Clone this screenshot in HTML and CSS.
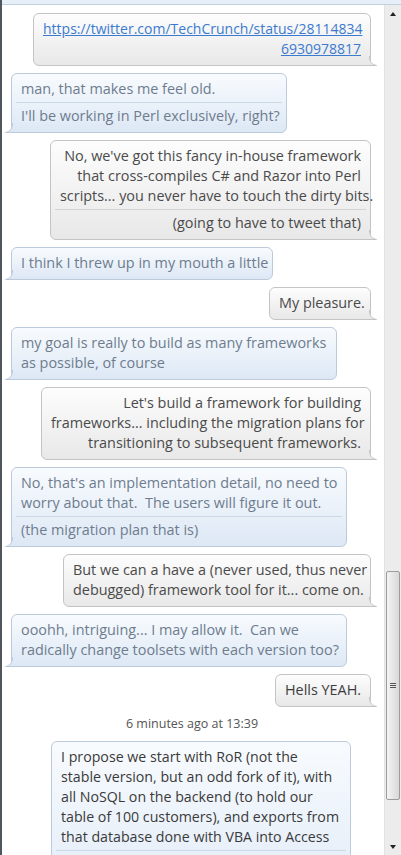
FILE: index.html
```html
<!DOCTYPE html>
<html>
<head>
<meta charset="utf-8">
<link rel="stylesheet" href="styles.css">
</head>
<body>
<div class="window">
  <div class="edge"></div>
  <div class="main">
    <div class="topstrip"></div>
    <div class="pane">
      <div class="chat">
        <div class="bubble sent w338">
          <div class="sect"><a class="link" href="#">https://twitter.com/TechCrunch/status/28114834<br>6930978817</a></div>
          <svg class="tail tail-r" width="8" height="10" viewBox="0 0 8 10"><path class="tf" d="M0 0 L1 0 C1 6 3 8.6 7.5 9.5 L0 9.5 Z"/><path class="ts" d="M0.5 0 C0.5 6 3 8.6 7.5 9.5 L0 9.5"/></svg>
        </div>
        <div class="bubble recv w276">
          <div class="sect">man, that makes me feel old.</div>
          <div class="rule"></div>
          <div class="sect">I'll be working in Perl exclusively, right?</div>
          <svg class="tail tail-l" width="8" height="10" viewBox="0 0 8 10"><path class="tf" d="M8 0 L7 0 C7 6 5 8.6 0.5 9.5 L8 9.5 Z"/><path class="ts" d="M7.5 0 C7.5 6 5 8.6 0.5 9.5 L8 9.5"/></svg>
        </div>
        <div class="bubble sent w321">
          <div class="sect">No, we've got this fancy in-house framework<br>that cross-compiles C# and Razor into Perl<br>scripts... you never have to touch the dirty bits.</div>
          <div class="rule"></div>
          <div class="sect">(going to have to tweet that)</div>
          <svg class="tail tail-r" width="8" height="10" viewBox="0 0 8 10"><path class="tf" d="M0 0 L1 0 C1 6 3 8.6 7.5 9.5 L0 9.5 Z"/><path class="ts" d="M0.5 0 C0.5 6 3 8.6 7.5 9.5 L0 9.5"/></svg>
        </div>
        <div class="bubble recv w262">
          <div class="sect">I think I threw up in my mouth a little</div>
          <svg class="tail tail-l" width="8" height="10" viewBox="0 0 8 10"><path class="tf" d="M8 0 L7 0 C7 6 5 8.6 0.5 9.5 L8 9.5 Z"/><path class="ts" d="M7.5 0 C7.5 6 5 8.6 0.5 9.5 L8 9.5"/></svg>
        </div>
        <div class="bubble sent w102">
          <div class="sect">My pleasure.</div>
          <svg class="tail tail-r" width="8" height="10" viewBox="0 0 8 10"><path class="tf" d="M0 0 L1 0 C1 6 3 8.6 7.5 9.5 L0 9.5 Z"/><path class="ts" d="M0.5 0 C0.5 6 3 8.6 7.5 9.5 L0 9.5"/></svg>
        </div>
        <div class="bubble recv w326">
          <div class="sect">my goal is really to build as many frameworks<br>as possible, of course</div>
          <svg class="tail tail-l" width="8" height="10" viewBox="0 0 8 10"><path class="tf" d="M8 0 L7 0 C7 6 5 8.6 0.5 9.5 L8 9.5 Z"/><path class="ts" d="M7.5 0 C7.5 6 5 8.6 0.5 9.5 L8 9.5"/></svg>
        </div>
        <div class="bubble sent w330">
          <div class="sect">Let's build a framework for building<br>frameworks... including the migration plans for<br>transitioning to subsequent frameworks.</div>
          <svg class="tail tail-r" width="8" height="10" viewBox="0 0 8 10"><path class="tf" d="M0 0 L1 0 C1 6 3 8.6 7.5 9.5 L0 9.5 Z"/><path class="ts" d="M0.5 0 C0.5 6 3 8.6 7.5 9.5 L0 9.5"/></svg>
        </div>
        <div class="bubble recv w336">
          <div class="sect">No, that's an implementation detail, no need to<br>worry about that.&nbsp; The users will figure it out.</div>
          <div class="rule"></div>
          <div class="sect">(the migration plan that is)</div>
          <svg class="tail tail-l" width="8" height="10" viewBox="0 0 8 10"><path class="tf" d="M8 0 L7 0 C7 6 5 8.6 0.5 9.5 L8 9.5 Z"/><path class="ts" d="M7.5 0 C7.5 6 5 8.6 0.5 9.5 L8 9.5"/></svg>
        </div>
        <div class="bubble sent w308">
          <div class="sect">But we can a have a (never used, thus never<br>debugged) framework tool for it... come on.</div>
          <svg class="tail tail-r" width="8" height="10" viewBox="0 0 8 10"><path class="tf" d="M0 0 L1 0 C1 6 3 8.6 7.5 9.5 L0 9.5 Z"/><path class="ts" d="M0.5 0 C0.5 6 3 8.6 7.5 9.5 L0 9.5"/></svg>
        </div>
        <div class="bubble recv w336">
          <div class="sect">ooohh, intriguing... I may allow it.&nbsp; Can we<br>radically change toolsets with each version too?</div>
          <svg class="tail tail-l" width="8" height="10" viewBox="0 0 8 10"><path class="tf" d="M8 0 L7 0 C7 6 5 8.6 0.5 9.5 L8 9.5 Z"/><path class="ts" d="M7.5 0 C7.5 6 5 8.6 0.5 9.5 L8 9.5"/></svg>
        </div>
        <div class="bubble sent w96">
          <div class="sect dark">Hells YEAH.</div>
          <svg class="tail tail-r" width="8" height="10" viewBox="0 0 8 10"><path class="tf" d="M0 0 L1 0 C1 6 3 8.6 7.5 9.5 L0 9.5 Z"/><path class="ts" d="M0.5 0 C0.5 6 3 8.6 7.5 9.5 L0 9.5"/></svg>
        </div>
        <div class="stamp">6 minutes ago at 13:39</div>
        <div class="bubble mine w300">
          <div class="sect">I propose we start with RoR (not the<br>stable version, but an odd fork of it), with<br>all NoSQL on the backend (to hold our<br>table of 100 customers), and exports from<br>that database done with VBA into Access</div>
          <div class="rule"></div>
          <div class="sect">&nbsp;</div>
        </div>
      </div>
      <div class="scrollbar">
        <div class="arrow up"></div>
        <div class="track">
          <div class="thumb"><div class="grip"><span></span><span></span><span></span></div></div>
        </div>
        <div class="arrow down"></div>
      </div>
    </div>
  </div>
</div>
</body>
</html>
```

FILE: styles.css
```css
* { box-sizing: border-box; }
html, body { margin: 0; padding: 0; background: #ffffff; }
body { width: 401px; height: 855px; overflow: hidden; font-family: "Open Sans", "Noto Sans", sans-serif; }

.window { display: flex; width: 401px; height: 855px; overflow: hidden; }
.edge { width: 2px; flex: none; background: #50565e; }
.main { flex: 1; display: flex; flex-direction: column; min-width: 0; }
.topstrip { height: 5px; flex: none; background: #e6eef7; border-bottom: 1px solid #c4d0de; }
.pane { flex: 1; display: flex; min-height: 0; }

.chat { flex: 1; display: flex; flex-direction: column; gap: 7px; padding-top: 8px; overflow: hidden; min-width: 0; }

.bubble { position: relative; flex: none; border: 1px solid #c4c4c4; border-radius: 6px; padding: 5px 9px 6px; font-size: 14.4px; line-height: 20px; white-space: nowrap; }
.sent { align-self: flex-end; margin-right: 13px; text-align: right; color: #4a4a4a; background: linear-gradient(#fdfdfd, #e8e8e8); border-bottom-right-radius: 0; }
.recv { align-self: flex-start; margin-left: 9px; color: #6e7c8e; background: linear-gradient(#f8fbfe, #dde8f5); border-color: #bdcadb; border-bottom-left-radius: 0; }
.mine { align-self: flex-start; margin-left: 49px; color: #3a3a3a; background: linear-gradient(#f8fbfe, #e4edf8); border-color: #bdcadb; font-size: 14.2px; }
.dark { color: #3c3c3c; }

.rule { height: 1px; margin: 3px -5px; background: #d3d3d3; }
.recv .rule, .mine .rule { background: #ccd8e6; }

.link { color: #3b7bcf; text-decoration: underline; font-size: 14px; }

.tail { position: absolute; bottom: -1px; overflow: visible; }
.tail-r { right: -7px; }
.tail-l { left: -7px; }
.tail .ts { fill: none; stroke-width: 1; }
.sent .tf { fill: #e8e8e8; }
.sent .ts { stroke: #c4c4c4; }
.recv .tf { fill: #dde8f5; }
.recv .ts { stroke: #bdcadb; }

.w338 { width: 338px; } .w276 { width: 276px; } .w321 { width: 321px; }
.w262 { width: 262px; } .w102 { width: 102px; } .w326 { width: 326px; }
.w330 { width: 330px; } .w336 { width: 336px; } .w308 { width: 308px; }
.w96 { width: 96px; } .w300 { width: 300px; }

.stamp { flex: none; text-align: center; font-size: 12.5px; line-height: 20px; color: #555; padding-right: 2px; }

.scrollbar { width: 17px; flex: none; display: flex; flex-direction: column; background: #ececec; border-left: 1px solid #e2e2e2; }
.arrow { height: 17px; flex: none; display: flex; align-items: center; justify-content: center; }
.arrow::before { content: ""; width: 0; height: 0; border-left: 3.5px solid transparent; border-right: 3.5px solid transparent; }
.up::before { border-bottom: 4px solid #222; }
.down::before { border-top: 4px solid #222; }
.track { flex: 1; display: flex; flex-direction: column; padding: 549px 1px 0 1px; }
.thumb { height: 229px; border: 1px solid #9c9c9c; border-radius: 2px; background: linear-gradient(to right, #f4f4f4, #e6e6e6 50%, #d8d8d8); display: flex; align-items: center; justify-content: center; }
.grip { display: flex; flex-direction: column; gap: 1px; }
.grip span { display: block; width: 6px; height: 1px; background: #555; }
```
